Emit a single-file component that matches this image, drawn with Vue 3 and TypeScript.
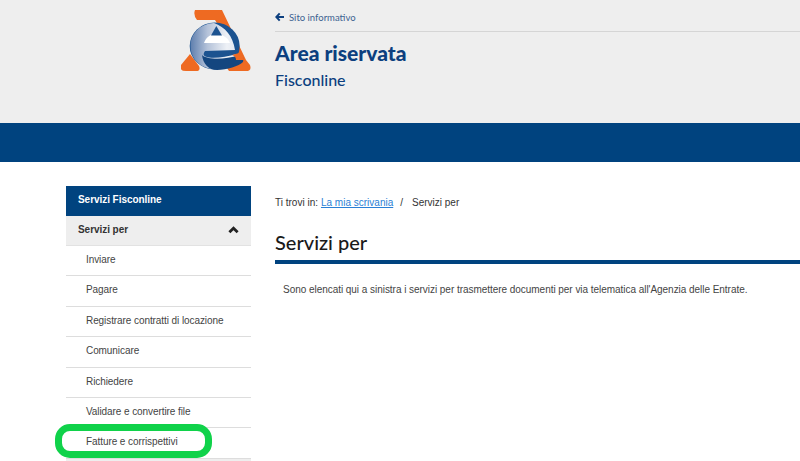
<script setup lang="ts">
const items: string[] = [
  'Inviare',
  'Pagare',
  'Registrare contratti di locazione',
  'Comunicare',
  'Richiedere',
  'Validare e convertire file',
  'Fatture e corrispettivi',
]
</script>

<template>
  <div class="page">
    <header class="head">
      <svg class="logo" viewBox="0 0 70 61" width="70" height="61">
        <defs>
          <linearGradient id="ball" x1="0" y1="0" x2="1" y2="0">
            <stop offset="0" stop-color="#5f7fae" />
            <stop offset="0.35" stop-color="#b4c2d9" />
            <stop offset="0.75" stop-color="#eef1f6" />
            <stop offset="1" stop-color="#dfe5ef" />
          </linearGradient>
        </defs>
        <path d="M14 0 H41 L65 50 L69 55 Q71 61 65 61 H48 L44 55 L52 40 L34 10 H16 Q12 5 14 0 Z" fill="#ee6a22" />
        <path d="M9 44 L0 55 Q-2 61 5 61 H15 Q20 61 18 56 Z" fill="#ee6a22" />
        <ellipse cx="33.7" cy="36" rx="25" ry="23.5" fill="#1c5390" />
        <path d="M9.5 36 C9.5 23 20 13.5 33 13 C44 17 52 26 54 40 L24 41 C22 44 22 46 26 47 C32 49 45 47 56 44 L58 46 C54 55 44 59 34 59 C20 59 9.5 49 9.5 36 Z" fill="url(#ball)" />
        <path d="M23 33 C25 27 30 24 35 24 C42 24 47 28 49 33 Z" fill="#ffffff" />
        <path d="M35.3 16 L41 25.5 H30 Z" fill="#1c5390" />
        <path d="M21 45 C26 50 44 50 58 45 C62 44 63 48 62 52 C58 56 46 60 36 60 C28 60 22 54 21 45 Z" fill="#14467f" />
        <path d="M51 45 L58 43 Q63 44 63 50 L55 50 Q55 46 51 45 Z" fill="#ee6a22" />
      </svg>
      <div class="head-text">
        <a class="back">
          <svg viewBox="0 0 10 10" width="9" height="10"><path d="M5.2 1 L1.5 5 L5.2 9 M1.5 5 H10" fill="none" stroke="#0c3f7f" stroke-width="2.2" /></svg>
          <span>Sito informativo</span>
        </a>
        <h1>Area riservata</h1>
        <p class="sub">Fisconline</p>
      </div>
    </header>
    <div class="band"></div>
    <main class="main">
      <nav class="side">
        <div class="side-title">Servizi Fisconline</div>
        <div class="side-group">
          <span>Servizi per</span>
          <svg viewBox="0 0 12 8" width="11" height="8"><path d="M1.5 6.5 L6 2 L10.5 6.5" fill="none" stroke="#222" stroke-width="3" /></svg>
        </div>
        <ul>
          <li v-for="item in items" :key="item">{{ item }}</li>
        </ul>
        <div class="tail"></div>
        <div class="mark"></div>
      </nav>
      <section class="content">
        <div class="crumb">
          <span>Ti trovi in:</span>
          <a>La mia scrivania</a>
          <span class="sep">/</span>
          <span>Servizi per</span>
        </div>
        <h2>Servizi per</h2>
        <p class="desc">Sono elencati qui a sinistra i servizi per trasmettere documenti per via telematica all'Agenzia delle Entrate.</p>
      </section>
    </main>
  </div>
</template>

<style>
html, body { margin: 0; background: #fff; overflow: hidden; }
</style>

<style scoped>
.page {
  width: 800px;
  height: 461px;
  overflow: hidden;
  font-family: "Liberation Sans", Arial, sans-serif;
  color: #333;
}
.head {
  height: 123px;
  box-sizing: border-box;
  background: #eeeeee;
  display: flex;
  align-items: flex-start;
  padding: 10px 0 0 181px;
}
.logo { flex: none; }
.head-text {
  margin-left: 24px;
  flex: 1;
}
.back {
  display: flex;
  align-items: center;
  gap: 5px;
  height: 14px;
  padding-bottom: 7px;
  border-bottom: 1px solid #d5d5d5;
  font-family: "Lato", sans-serif;
  font-size: 9.5px;
  color: #3c6291;
}
h1 {
  margin: 7px 0 0;
  font-family: "Lato", sans-serif;
  font-size: 21px;
  line-height: 28px;
  font-weight: 900;
  color: #0c3f7f;
}
.sub {
  margin: 3px 0 0;
  font-family: "Lato", sans-serif;
  font-size: 16px;
  line-height: 20px;
  font-weight: 500;
  color: #0c3f7f;
}
.band { height: 39px; background: #00437f; }
.main {
  display: flex;
  padding: 24px 0 0 66px;
}
.side {
  width: 185px;
  flex: none;
  position: relative;
}
.side-title {
  height: 30px;
  box-sizing: border-box;
  background: #00437f;
  color: #fff;
  font-size: 10px;
  letter-spacing: -0.05px;
  font-weight: 700;
  line-height: 28px;
  padding-left: 12px;
}
.side-group {
  height: 30px;
  box-sizing: border-box;
  background: #eeeeee;
  border-bottom: 1px solid #e2e2e2;
  font-size: 10px;
  letter-spacing: -0.05px;
  font-weight: 700;
  color: #333;
  display: flex;
  align-items: center;
  justify-content: space-between;
  padding: 0 12px 2px;
}
ul {
  list-style: none;
  margin: 0;
  padding: 0;
}
li {
  height: 30.4px;
  box-sizing: border-box;
  border-bottom: 1px solid #dddddd;
  font-size: 10px;
  letter-spacing: -0.08px;
  line-height: 28.6px;
  padding-left: 20px;
  color: #444;
}
.tail {
  height: 4px;
  background: #eeeeee;
}
.mark {
  position: absolute;
  left: -11px;
  top: 238px;
  width: 157px;
  height: 34px;
  box-sizing: border-box;
  border: 7px solid #10d24a;
  border-radius: 15px;
}
.content {
  flex: 1;
  margin-left: 24px;
}
.crumb {
  display: flex;
  height: 32px;
  align-items: center;
  font-size: 10px;
  color: #333;
}
.crumb a {
  margin-left: 3px;
  color: #2a7fd5;
  text-decoration: underline;
}
.sep { margin: 0 9px 0 7px; }
h2 {
  margin: 11px 0 0;
  height: 31px;
  border-bottom: 4px solid #00437f;
  font-family: "Lato", sans-serif;
  font-size: 20px;
  line-height: 26px;
  font-weight: 500;
  color: #1a1a1a;
}
.desc {
  margin: 19px 0 0 8px;
  font-size: 10px;
  letter-spacing: -0.04px;
  line-height: 14px;
  color: #444;
  white-space: nowrap;
}
</style>
